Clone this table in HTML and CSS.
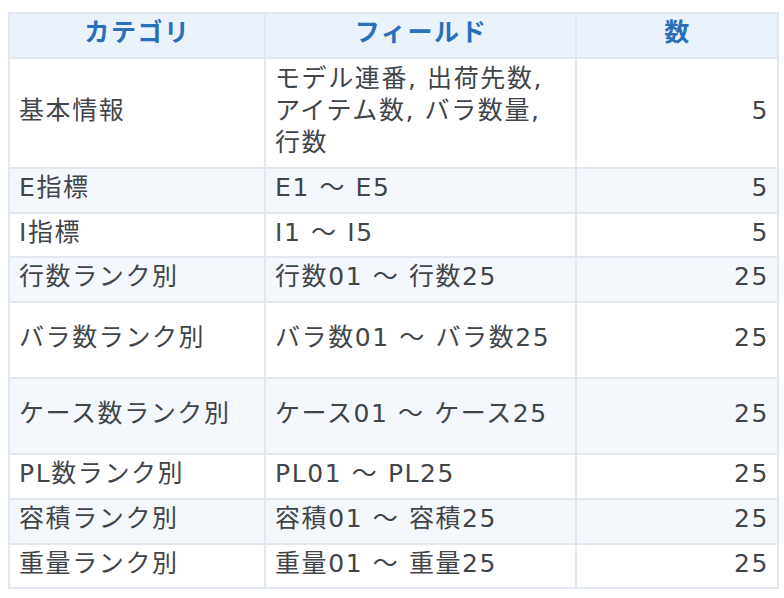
FILE: index.html
```html
<!DOCTYPE html>
<html lang="ja">
<head>
<meta charset="utf-8">
<link rel="stylesheet" href="styles.css">
</head>
<body>
<table class="fields">
  <colgroup>
    <col class="c-cat">
    <col class="c-field">
    <col class="c-num">
  </colgroup>
  <thead>
    <tr class="head"><th>カテゴリ</th><th>フィールド</th><th>数</th></tr>
  </thead>
  <tbody>
    <tr class="r-tall3"><td>基本情報</td><td><span class="item">モデル連番,</span> <span class="item">出荷先数,</span> <span class="item">アイテム数,</span> <span class="item">バラ数量,</span> <span class="item">行数</span></td><td class="num">5</td></tr>
    <tr><td>E指標</td><td>E1 ～ E5</td><td class="num">5</td></tr>
    <tr class="r-short"><td>I指標</td><td>I1 ～ I5</td><td class="num">5</td></tr>
    <tr><td>行数ランク別</td><td>行数01 ～ 行数25</td><td class="num">25</td></tr>
    <tr class="r-tall2"><td>バラ数ランク別</td><td>バラ数01 ～ バラ数25</td><td class="num">25</td></tr>
    <tr class="r-tall2"><td>ケース数ランク別</td><td>ケース01 ～ ケース25</td><td class="num">25</td></tr>
    <tr><td>PL数ランク別</td><td>PL01 ～ PL25</td><td class="num">25</td></tr>
    <tr><td>容積ランク別</td><td>容積01 ～ 容積25</td><td class="num">25</td></tr>
    <tr class="r-short"><td>重量ランク別</td><td>重量01 ～ 重量25</td><td class="num">25</td></tr>
  </tbody>
</table>
</body>
</html>
```
FILE: styles.css
```css
html, body {
  margin: 0;
  padding: 0;
  background: #ffffff;
}
body {
  padding: 12px 0 0 8px;
  font-family: "DejaVu Sans", "Noto Sans CJK JP", sans-serif;
}
.fields {
  border-collapse: collapse;
  width: 769px;
  table-layout: fixed;
  font-size: 25px;
  letter-spacing: 1.6px;
  color: #414549;
}
.c-cat { width: 256px; }
.c-field { width: 311px; }
.c-num { width: 202px; }
.fields th,
.fields td {
  border: 2px solid #e2e8ef;
  padding: 0 8px 5px 9px;
  line-height: 32px;
  height: 45px;
  box-sizing: border-box;
  vertical-align: middle;
  font-weight: 400;
  text-align: left;
}
.fields th {
  background: #eaf3fc;
  color: #2a6fb9;
  font-weight: 700;
  text-align: center;
}
.fields tbody tr:nth-child(even) td {
  background: #f4f7fb;
}
.fields td.num {
  text-align: right;
}
.item {
  white-space: nowrap;
}
.fields .r-tall3 td { height: 110px; }
.fields .r-tall2 td { height: 76px; }
.fields .r-short td { height: 44px; }
```
